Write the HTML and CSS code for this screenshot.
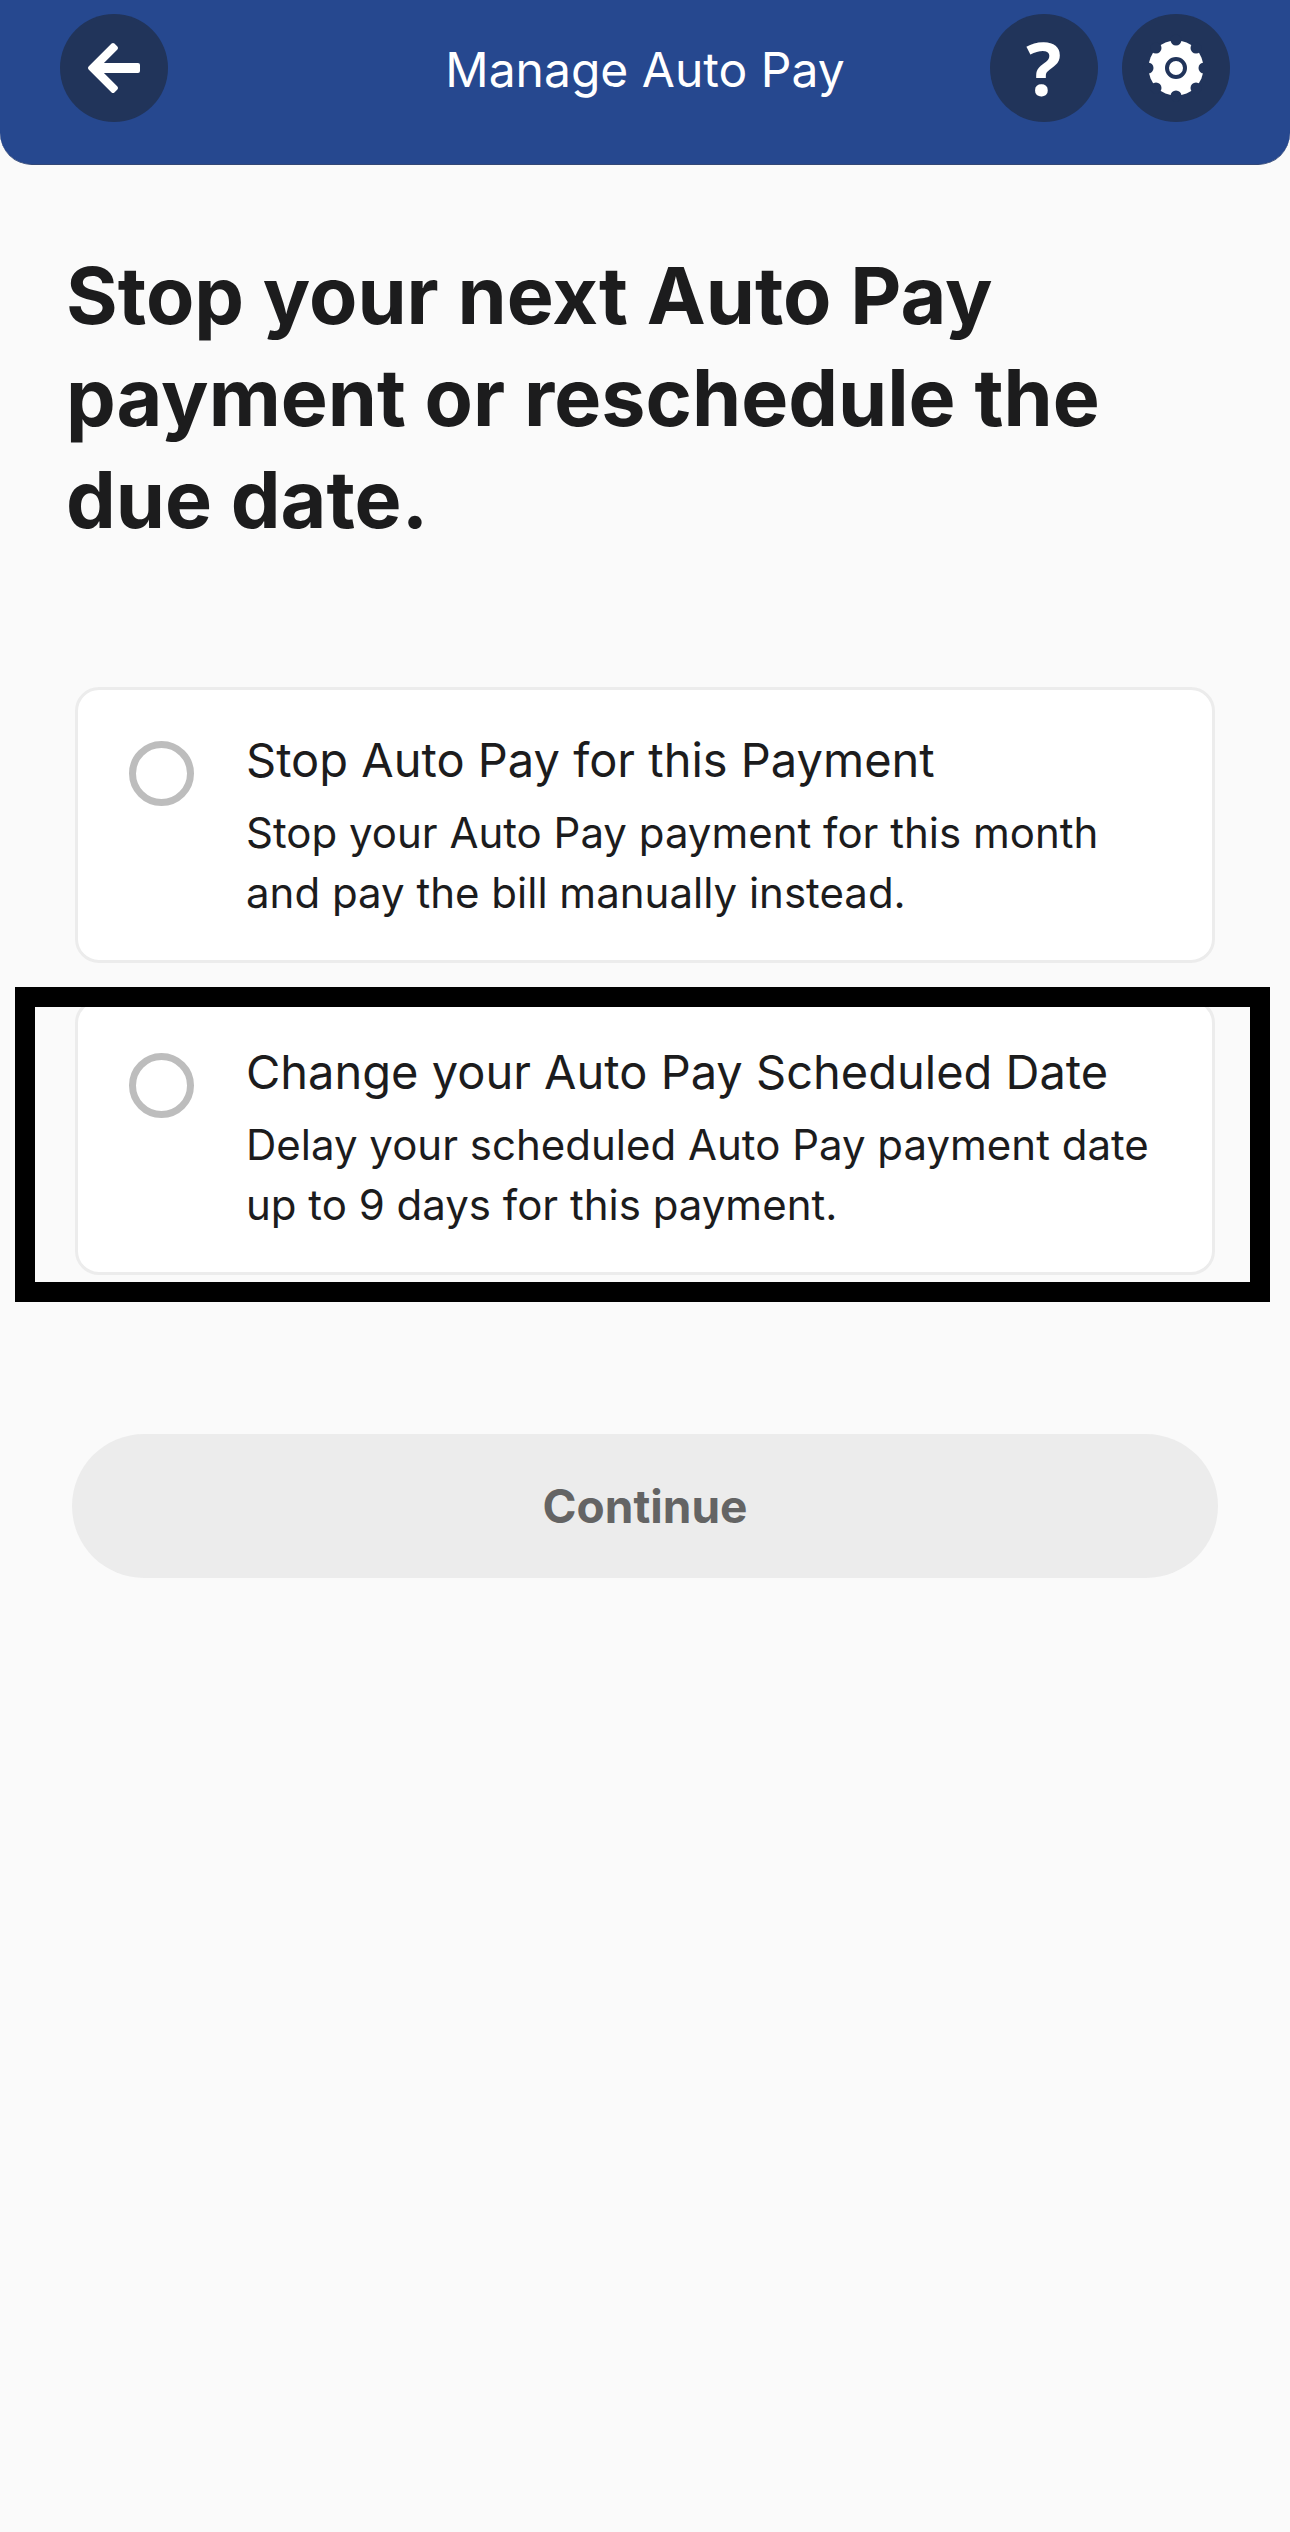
FILE: index.html
```html
<!DOCTYPE html>
<html lang="en">
<head>
<meta charset="utf-8">
<meta name="viewport" content="width=device-width, initial-scale=1">
<title>Manage Auto Pay</title>
<link rel="stylesheet" href="styles.css">
</head>
<body>
<header class="topbar">
  <div class="topbar-side">
    <button class="round-button" type="button" aria-label="Back">
      <svg class="icon" viewBox="0 0 108 108" aria-hidden="true">
        <path d="M30 54 53 31l3 3-17 17h39v6H39l17 17-3 3z" fill="#fff" stroke="#fff" stroke-width="4" stroke-linejoin="round"/>
      </svg>
    </button>
  </div>
  <h1 class="topbar-title">Manage Auto Pay</h1>
  <div class="topbar-side topbar-actions">
    <button class="round-button help" type="button">?</button>
    <button class="round-button" type="button" aria-label="Settings">
      <svg class="icon" viewBox="0 0 108 108" aria-hidden="true">
        <circle cx="54" cy="54" r="27.5" fill="#fff"/>
        <g fill="#21345a">
          <circle cx="54" cy="26" r="5.5"/>
          <circle cx="74" cy="34" r="5.5"/>
          <circle cx="82" cy="54" r="5.5"/>
          <circle cx="74" cy="74" r="5.5"/>
          <circle cx="54" cy="82" r="5.5"/>
          <circle cx="34" cy="74" r="5.5"/>
          <circle cx="26" cy="54" r="5.5"/>
          <circle cx="34" cy="34" r="5.5"/>
        </g>
        <circle cx="54" cy="54" r="9" fill="none" stroke="#21345a" stroke-width="4"/>
      </svg>
    </button>
  </div>
</header>
<main>
  <form class="content">
    <h2 class="headline">Stop your next Auto Pay payment or reschedule the due date.</h2>
    <div class="options">
      <label class="option">
        <input class="radio" type="radio" name="choice" value="stop">
        <span class="option-text">
          <span class="option-title">Stop Auto Pay for this Payment</span>
          <span class="option-note">Stop your Auto Pay payment for this month and pay the bill manually instead.</span>
        </span>
      </label>
      <label class="option highlighted">
        <input class="radio" type="radio" name="choice" value="change">
        <span class="option-text">
          <span class="option-title">Change your Auto Pay Scheduled Date</span>
          <span class="option-note">Delay your scheduled Auto Pay payment date up to 9 days for this payment.</span>
        </span>
      </label>
    </div>
    <button class="continue" type="submit" disabled>Continue</button>
  </form>
</main>
</body>
</html>
```
FILE: styles.css
```css
* {
  box-sizing: border-box;
}

body {
  margin: 0;
  background: #fafafa;
  color: #1c1c1d;
  font-family: Inter, "Liberation Sans", sans-serif;
}

.topbar {
  display: flex;
  align-items: flex-start;
  padding: 14px 60px 42px;
  background: #26488f;
  border-bottom: 1px solid #344876;
  border-radius: 0 0 32px 32px;
}

.topbar-side {
  display: flex;
  flex: 1;
}

.topbar-actions {
  justify-content: flex-end;
  gap: 24px;
}

.topbar-title {
  margin: 0;
  padding-top: 4px;
  color: #fff;
  font-size: 48px;
  font-weight: 400;
  line-height: 104px;
}

.round-button {
  width: 108px;
  height: 108px;
  padding: 0;
  border: 0;
  border-radius: 50%;
  background: #21345a;
  color: #fff;
}

.icon {
  display: block;
  width: 100%;
  height: 100%;
}

.help {
  font: 700 74px/108px "Open Sans", "Noto Sans", sans-serif;
}

.content {
  display: flex;
  flex-direction: column;
  padding: 79px 72px;
}

.headline {
  margin: 0 0 0 -6px;
  max-width: 1100px;
  font-size: 79px;
  font-weight: 700;
  line-height: 102px;
}

.options {
  display: flex;
  flex-direction: column;
  gap: 36px;
  margin: 137px 3px 0;
}

.option {
  position: relative;
  display: flex;
  gap: 52px;
  padding: 38px 51px 37px;
  border: 3px solid #ececec;
  border-radius: 24px;
  background: #fff;
}

.highlighted::after {
  content: "";
  position: absolute;
  inset: -15px -58px -30px -63px;
  border: 20px solid #000;
  pointer-events: none;
}

.radio {
  appearance: none;
  flex: none;
  width: 65px;
  height: 65px;
  margin: 13px 0 0;
  border: 7px solid #bdbdbd;
  border-radius: 50%;
}

.radio:checked {
  border-width: 20px;
  border-color: #26488f;
}

.option-text {
  display: flex;
  flex-direction: column;
  gap: 11px;
}

.option-title {
  font-size: 47px;
  line-height: 64px;
}

.option-note {
  font-size: 42px;
  line-height: 60px;
}

.continue {
  margin-top: 159px;
  padding: 0;
  border: 0;
  border-radius: 72px;
  background: #ececec;
  color: #646464;
  font: 700 46px/144px Inter, "Liberation Sans", sans-serif;
}
```
